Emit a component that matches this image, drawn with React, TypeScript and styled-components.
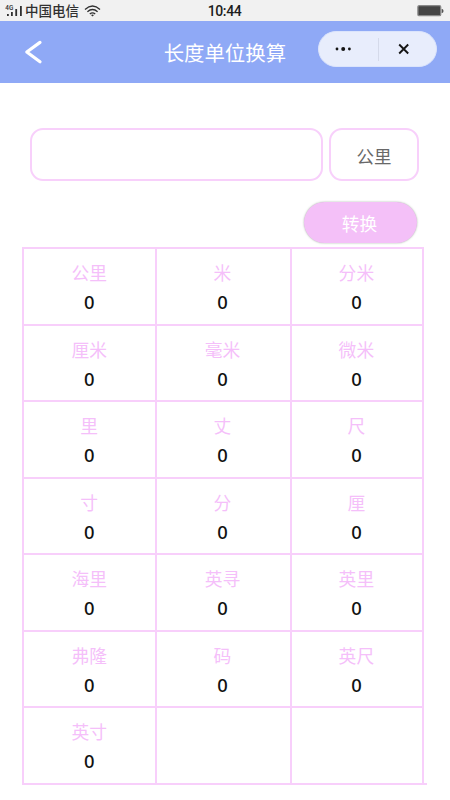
import React from "react";
import styled, { createGlobalStyle } from "styled-components";

const Global = createGlobalStyle`
  * { box-sizing: border-box; }
  body {
    margin: 0;
    background: #fff;
    font-family: Roboto, "Noto Sans CJK SC", sans-serif;
  }
`;

const Page = styled.div`
  width: 450px;
  height: 800px;
  overflow: hidden;
  background: #fff;
`;

const StatusBar = styled.header`
  display: grid;
  grid-template-columns: 1fr auto 1fr;
  align-items: center;
  height: 21px;
  padding: 0 6px 0 5px;
  background: #f1f1f1;
  color: #303030;
`;

const Carrier = styled.div`
  display: flex;
  align-items: center;
  height: 21px;
`;

const CarrierName = styled.span`
  margin: -1px 0 0 2px;
  font: 500 13.5px/20px "Noto Sans CJK SC", sans-serif;
`;

const WifiIcon = styled.svg`
  margin-left: 5px;
`;

const Clock = styled.time`
  padding-top: 2px;
  font-size: 14px;
  font-weight: 500;
  line-height: 19px;
  letter-spacing: -0.4px;
  color: #1d1d1d;
`;

const BatteryIcon = styled.svg`
  justify-self: end;
`;

const NavBar = styled.nav`
  display: grid;
  grid-template-columns: 163.7px 1fr 119px;
  align-items: center;
  height: 62px;
  padding-right: 13px;
  background: #8fa9f6;
`;

const BackButton = styled.button`
  display: flex;
  width: 44px;
  margin-left: 12px;
  padding: 0 12px;
  border: 0;
  background: none;
`;

const Title = styled.h1`
  margin: 3px 0 0;
  color: #fff;
  font-size: 20.4px;
  font-weight: 400;
  line-height: 30px;
  white-space: nowrap;
`;

const Capsule = styled.div`
  display: grid;
  grid-template-columns: 59px 1px 1fr;
  align-items: center;
  height: 36px;
  margin-bottom: 6px;
  border: 1px solid #dbe4fc;
  border-radius: 18px;
  background: #e8edfc;
`;

const CapsuleButton = styled.button<{ $inset: number }>`
  display: flex;
  padding: 0 0 0 ${(p) => p.$inset}px;
  border: 0;
  background: none;
`;

const CapsuleDivider = styled.span`
  height: 23px;
  background: #d5daea;
`;

const InputRow = styled.div`
  display: grid;
  grid-template-columns: 293px 90px;
  gap: 6px;
  padding: 45px 0 0 30px;
`;

const LengthInput = styled.input`
  height: 53px;
  padding: 0 14px;
  border: 2px solid #f8d0fb;
  border-radius: 13px;
  outline: 0;
  background: #fff;
  font-size: 18px;
`;

const UnitPicker = styled.button`
  height: 53px;
  padding: 2px 0 0;
  border: 2px solid #f8d0fb;
  border-radius: 13px;
  background: #fff;
  color: #686868;
  font: 400 17.5px/24px "Noto Sans CJK SC", sans-serif;
`;

const ConvertButton = styled.button`
  display: block;
  width: 113px;
  height: 41px;
  margin: 21px 0 0 303.5px;
  padding: 1px 1px 0 0;
  border: 0;
  border-radius: 21px;
  background: #f4c0f8;
  box-shadow: 0 0 2px rgba(70, 90, 70, 0.5);
  color: #fff;
  font: 400 17.7px/24px "Noto Sans CJK SC", sans-serif;
`;

const Results = styled.main`
  display: grid;
  grid-template-columns: 133px 135px 134px;
  grid-template-rows: repeat(7, 76.57px);
  width: 405px;
  margin: 4px 0 0 22px;
  border-bottom: 2px solid #f8cffb;
`;

const Cell = styled.section<{ $column: number }>`
  display: flex;
  flex-direction: column;
  align-items: center;
  padding: 12px ${(p) => [0.6, 2, 1.2][p.$column]}px 0 0;
  border-top: 2px solid #f8cffb;
  border-left: 2px solid #f8cffb;
  border-right: ${(p) => (p.$column === 2 ? "2px solid #f8cffb" : "0")};
`;

const UnitName = styled.span`
  color: #f5bffa;
  font-size: 17.8px;
  line-height: 26px;
`;

const UnitValue = styled.span`
  margin-top: 2px;
  color: #111;
  font-family: "Noto Sans", sans-serif;
  font-size: 18.4px;
  font-weight: 500;
  line-height: 26px;
`;

const UNITS = [
  "公里", "米", "分米",
  "厘米", "毫米", "微米",
  "里", "丈", "尺",
  "寸", "分", "厘",
  "海里", "英寻", "英里",
  "弗隆", "码", "英尺",
  "英寸", "", "",
];

export default function App() {
  return (
    <Page>
      <Global />
      <StatusBar>
        <Carrier>
          <svg width="18" height="14" viewBox="0 0 18 14" fill="#303030">
            <text x="0.3" y="5.9" fontSize="6.4" fontWeight="500" fontFamily="Roboto">4G</text>
            <rect x="2" y="10" width="1.8" height="2" />
            <rect x="6" y="8" width="1.8" height="4" />
            <rect x="10.3" y="5" width="1.8" height="7" />
            <rect x="15" y="2" width="1.8" height="10" />
          </svg>
          <CarrierName>中国电信</CarrierName>
          <WifiIcon width="17" height="12" viewBox="0 0 17 12" fill="none" stroke="#303030" strokeWidth="1.3">
            <path d="M1 4.4Q8.5-2.3 16 4.4M3.4 6.7Q8.5 2.3 13.6 6.7M5.8 9Q8.5 6.7 11.2 9" />
            <path d="M7 10.1Q8.5 9 10 10.1L8.5 11.6Z" fill="#303030" stroke="none" />
          </WifiIcon>
        </Carrier>
        <Clock>10:44</Clock>
        <BatteryIcon width="27" height="12" viewBox="0 0 27 12">
          <rect x="0.9" y="0.7" width="22.8" height="10" rx="1.3" fill="#444" stroke="#898989" strokeWidth="1.3" />
          <path d="M24.7 4h.7l1 1v2l-1 1h-.7z" fill="#555" />
        </BatteryIcon>
      </StatusBar>

      <NavBar>
        <BackButton aria-label="返回">
          <svg width="20" height="24" viewBox="0 0 20 24" fill="none" stroke="#fff" strokeWidth="3.2" strokeLinecap="round" strokeLinejoin="round">
            <path d="M16 2.4L2.8 12L16 21.7" />
          </svg>
        </BackButton>
        <Title>长度单位换算</Title>
        <Capsule>
          <CapsuleButton $inset={16} aria-label="更多">
            <svg width="17" height="6" viewBox="0 0 17 6" fill="#151515">
              <circle cx="2" cy="3" r="1.4" />
              <circle cx="8.2" cy="3" r="2" />
              <circle cx="14.4" cy="3" r="1.4" />
            </svg>
          </CapsuleButton>
          <CapsuleDivider />
          <CapsuleButton $inset={19} aria-label="关闭">
            <svg width="12" height="12" viewBox="0 0 12 12" stroke="#151515" strokeWidth="1.9">
              <path d="M1.2 1.5L10.2 10.5M10.2 1.5L1.2 10.5" />
            </svg>
          </CapsuleButton>
        </Capsule>
      </NavBar>

      <InputRow>
        <LengthInput aria-label="长度" />
        <UnitPicker>公里</UnitPicker>
      </InputRow>
      <ConvertButton>转换</ConvertButton>

      <Results>
        {UNITS.map((unit, i) => (
          <Cell key={i} $column={i % 3}>
            {unit && (
              <>
                <UnitName>{unit}</UnitName>
                <UnitValue>0</UnitValue>
              </>
            )}
          </Cell>
        ))}
      </Results>
    </Page>
  );
}
